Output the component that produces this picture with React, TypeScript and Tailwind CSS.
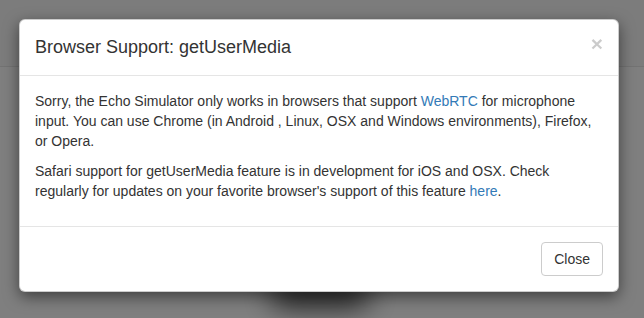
import React from 'react';

export default function App() {
  return (
    <div
      className="relative w-[644px] h-[318px] overflow-hidden bg-white text-[#333] text-[14px] leading-[20px]"
      style={{ fontFamily: '"Liberation Sans", Arial, Helvetica, sans-serif' }}
    >
      {/* page underneath the backdrop */}
      <div className="h-[67px] bg-[#f8f8f8] border-b border-[#e7e7e7]" />
      <div className="absolute left-[270px] top-[278px] w-[100px] h-[30px] rounded-full bg-black/70 blur-[14px]" />

      {/* backdrop */}
      <div className="absolute inset-0 bg-black/50" />

      {/* modal */}
      <div className="absolute inset-0 pt-[19px] pl-[19px]">
        <div className="w-[600px] h-fit bg-white border border-black/20 rounded-[6px] shadow-[0_5px_15px_rgba(0,0,0,0.5)]">
          <div className="flex items-start justify-between px-[15px] pt-[15px] pb-[14px] border-b border-[#e5e5e5]">
            <h4 className="text-[18px] leading-[25.7px] font-normal text-[#333]">
              Browser Support: getUserMedia
            </h4>
            <button
              type="button"
              className="mt-[-2px] text-[21px] leading-[21px] font-bold text-black opacity-20"
            >
              ×
            </button>
          </div>

          <div className="p-[15px]">
            <p className="mb-[10px]">
              Sorry, the Echo Simulator only works in browsers that support{' '}
              <a href="#" className="text-[#337ab7]">WebRTC</a> for microphone input. You can use
              Chrome (in Android , Linux, OSX and Windows environments), Firefox, or Opera.
            </p>
            <p className="mb-[10px]">
              Safari support for getUserMedia feature is in development for iOS and OSX. Check
              regularly for updates on your favorite browser's support of this feature{' '}
              <a href="#" className="text-[#337ab7]">here</a>.
            </p>
          </div>

          <div className="flex justify-end p-[15px] border-t border-[#e5e5e5]">
            <button
              type="button"
              className="h-[34px] px-[12px] bg-white border border-[#ccc] rounded-[4px] text-[14px] leading-[20px] text-[#333]"
            >
              Close
            </button>
          </div>
        </div>
      </div>
    </div>
  );
}
